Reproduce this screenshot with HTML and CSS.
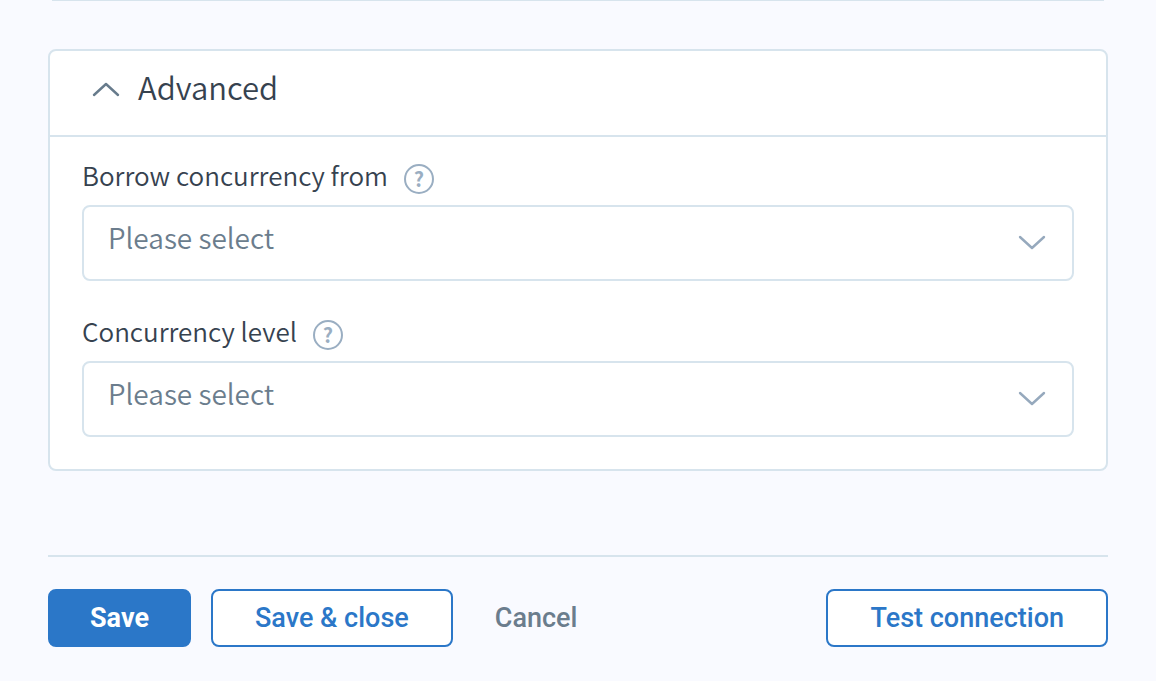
FILE: index.html
```html
<!DOCTYPE html>
<html lang="en">
<head>
    <meta charset="UTF-8">
    <meta name="viewport" content="width=device-width, initial-scale=1.0">
    <title>Advanced</title>
    <link rel="stylesheet" href="styles.css">
</head>
<body>
    <form class="page">
        <div class="card-end"></div>
        <section class="card">
            <h2 class="card-header">
                <button type="button" class="card-toggle" aria-expanded="true">
                    <svg class="chevron" width="28" height="16" viewBox="0 0 28 16"><path d="M2 14 14 3 26 14"/></svg>
                    <span>Advanced</span>
                </button>
            </h2>
            <div class="card-body">
                <div class="field">
                    <div class="field-label">
                        <label for="borrow">Borrow concurrency from</label>
                        <button type="button" class="help">?</button>
                    </div>
                    <div class="select">
                        <select id="borrow">
                            <option>Please select</option>
                        </select>
                        <svg class="chevron" width="28" height="16" viewBox="0 0 28 16"><path d="M2 2 14 13 26 2"/></svg>
                    </div>
                </div>
                <div class="field">
                    <div class="field-label">
                        <label for="level">Concurrency level</label>
                        <button type="button" class="help">?</button>
                    </div>
                    <div class="select">
                        <select id="level">
                            <option>Please select</option>
                        </select>
                        <svg class="chevron" width="28" height="16" viewBox="0 0 28 16"><path d="M2 2 14 13 26 2"/></svg>
                    </div>
                </div>
            </div>
        </section>
        <div class="actions">
            <button type="submit" class="btn btn-primary">Save</button>
            <button type="button" class="btn btn-outline">Save &amp; close</button>
            <button type="button" class="btn btn-text">Cancel</button>
            <button type="button" class="btn btn-outline btn-right">Test connection</button>
        </div>
    </form>
</body>
</html>
```

FILE: styles.css
```css
* {
    box-sizing: border-box;
}
body {
    margin: 0;
    background-color: #f9faff;
    color: #36424f;
    font-family: "Noto Sans CJK SC", "Noto Sans", sans-serif;
    font-weight: 350;
}
button, select {
    margin: 0;
    font-family: inherit;
    font-weight: inherit;
    cursor: pointer;
}
.page {
    padding: 0 48px;
}
.card-end {
    height: 1px;
    margin: 0 4px 48px;
    background-color: #d7e4ed;
}
.card {
    background-color: #ffffff;
    border: 2px solid #d7e4ed;
    border-radius: 8px;
}
.card-header {
    margin: 0;
    border-bottom: 2px solid #d7e4ed;
    font-weight: 350;
}
.card-toggle {
    display: flex;
    align-items: center;
    gap: 18px;
    width: 100%;
    padding: 12px 42px 24px;
    border: none;
    background: none;
    color: inherit;
    font-size: 31px;
    line-height: 48px;
}
.card-toggle .chevron {
    margin-top: 4px;
}
.chevron {
    fill: none;
    stroke: #677b8c;
    stroke-width: 2.4;
    stroke-linecap: round;
    stroke-linejoin: round;
}
.card-body {
    display: flex;
    flex-direction: column;
    gap: 36px;
    padding: 24px 32px 32px;
}
.field-label {
    display: flex;
    align-items: flex-start;
    gap: 16px;
    height: 44px;
    font-size: 26px;
    line-height: 28px;
}
.help {
    width: 30px;
    height: 30px;
    margin-top: 3px;
    padding: 0;
    border: 2px solid #9aaec2;
    border-radius: 50%;
    background: none;
    color: #9aaec2;
    font-family: "Noto Sans CJK SC", "Noto Sans", sans-serif;
    font-size: 20px;
    font-weight: 700;
    line-height: 26px;
}
.select {
    position: relative;
}
.select select {
    appearance: none;
    display: block;
    width: 100%;
    height: 76px;
    padding: 0 72px 12px 24px;
    border: 2px solid #d7e4ed;
    border-radius: 8px;
    background-color: #ffffff;
    color: #6b7d8d;
    font-size: 28px;
}
.select .chevron {
    position: absolute;
    top: 30px;
    right: 28px;
    stroke: #96a9bd;
    pointer-events: none;
}
.actions {
    display: flex;
    gap: 20px;
    margin-top: 84px;
    padding: 32px 0;
    border-top: 2px solid #d7e4ed;
}
.btn {
    height: 58px;
    padding: 0 40px;
    border: 2px solid transparent;
    border-radius: 8px;
    background: none;
    font-family: Roboto, sans-serif;
    font-size: 27px;
    font-weight: 500;
}
.btn-primary {
    background-color: #2b77c8;
    border-color: #2b77c8;
    color: #ffffff;
    font-weight: 700;
}
.btn-outline {
    padding: 0 42px;
    background-color: #ffffff;
    border-color: #2b77c8;
    color: #2b77c8;
}
.btn-text {
    padding: 0 20px;
    color: #6b7d8d;
}
.btn-right {
    margin-left: auto;
}
```
